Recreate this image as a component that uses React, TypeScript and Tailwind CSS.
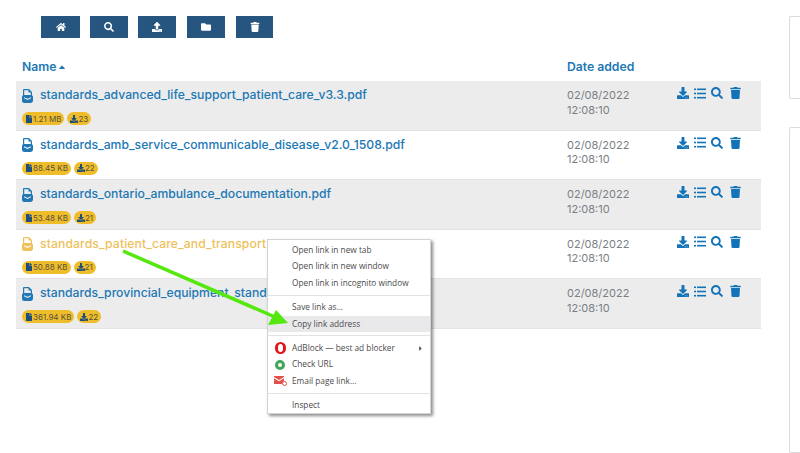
import React from "react";
import { FaHome, FaSearch, FaUpload, FaFolder, FaTrash, FaDownload, FaCaretUp, FaCaretRight, FaFile } from "react-icons/fa";

const files = [
  { name: "standards_advanced_life_support_patient_care_v3.3.pdf", size: "1.21 MB", count: "23" },
  { name: "standards_amb_service_communicable_disease_v2.0_1508.pdf", size: "88.45 KB", count: "22" },
  { name: "standards_ontario_ambulance_documentation.pdf", size: "53.48 KB", count: "21" },
  { name: "standards_patient_care_and_transport", size: "50.88 KB", count: "21", hover: true },
  { name: "standards_provincial_equipment_stand", size: "361.94 KB", count: "22" },
];

const toolbar = [
  { icon: FaHome, width: "w-[39px]", mr: "mr-[10px]" },
  { icon: FaSearch, width: "w-[38px]", mr: "mr-[10px]" },
  { icon: FaUpload, width: "w-[38px]", mr: "mr-[11px]" },
  { icon: FaFolder, width: "w-[38px]", mr: "mr-[11px]" },
  { icon: FaTrash, width: "w-[37px]", mr: "" },
];

function FileIcon() {
  return (
    <svg className="shrink-0" width="11" height="14" viewBox="0 0 11 14" fill="currentColor">
      <path fillRule="evenodd" d="M2 0h5l3 3v3.200c.6.3 1 .9 1 1.600v3.700c0 1.400-1.100 2.500-2.500 2.500h-6A2.500 2.500 0 0 1 0 11.500V7.800c0-.7.4-1.300 1-1.600V1a1 1 0 0 1 1-1zM2.200 1.200V6h6.600V3.600H6.500V1.200zM2 8.200l3.500 1.600L9 8.200v1.100l-3.500 1.600L2 9.300z" />
    </svg>
  );
}

function ListIcon() {
  return (
    <svg width="12" height="11" viewBox="0 0 12 11" fill="currentColor">
      <rect x="0" y="0.500" width="2" height="1.600" />
      <rect x="3" y="0.500" width="9" height="1.600" />
      <rect x="0" y="4.700" width="2" height="1.600" />
      <rect x="3" y="4.700" width="9" height="1.600" />
      <rect x="0" y="8.900" width="2" height="1.600" />
      <rect x="3" y="8.900" width="9" height="1.600" />
    </svg>
  );
}

function Pill({ icon: Icon, text }: { icon: React.ComponentType<{ className?: string }>; text: string }) {
  return (
    <span className="inline-flex h-[13px] items-center rounded-full bg-[#f0bd2a] px-[3px] text-[8px] leading-none text-[#55523f]">
      <Icon className="h-[8px] w-[8px] text-[#1c4f7c]" />
      <span>{text}</span>
    </span>
  );
}

function Row({ name, size, count, hover, shaded }: { name: string; size: string; count: string; hover?: boolean; shaded: boolean }) {
  return (
    <div className={`flex h-[49.500px] items-start border-b border-[#e4e4e4] ${shaded ? "bg-[#ececec]" : "bg-white"}`}>
      <div className="w-[551px] shrink-0 pl-[6px] pt-[6px]">
        <div className={`flex h-[17px] items-center gap-[7px] text-[12.200px] font-medium whitespace-nowrap ${hover ? "tracking-[0.1px] text-[#eec15a]" : "text-[#2178b5]"}`}>
          <FileIcon />
          <span>{name}</span>
        </div>
        <div className="mt-[8px] flex gap-[3px]">
          <Pill icon={FaFile} text={size} />
          <Pill icon={FaDownload} text={count} />
        </div>
      </div>
      <div className="w-[110px] shrink-0 pt-[7px] text-[11px] leading-[14.500px] text-[#7a7f85]">
        <div>02/08/2022</div>
        <div>12:08:10</div>
      </div>
      <div className="flex items-center gap-[5px] pt-[6px] text-[#1273b8]">
        <FaDownload className="h-[12px] w-[12px]" />
        <ListIcon />
        <FaSearch className="h-[12px] w-[12px]" />
        <FaTrash className="ml-[2px] h-[12px] w-[11px]" />
      </div>
    </div>
  );
}

function MenuItem({ text, active, icon, arrow }: { text: string; active?: boolean; icon?: React.ReactNode; arrow?: boolean }) {
  return (
    <div className={`flex h-[16.400px] items-center pr-[6px] text-[8.300px] text-[#4a4a4a] ${active ? "bg-[#e9e9ec]" : ""}`}>
      <span className="flex w-[24px] shrink-0 justify-center">{icon}</span>
      <span className="grow whitespace-nowrap">{text}</span>
      {arrow && <FaCaretRight className="h-[7px] w-[7px] text-[#444]" />}
    </div>
  );
}

function ContextMenu() {
  return (
    <div className="absolute left-[267px] top-[239px] z-10 h-[175px] w-[164px] border border-[#d4d4d4] bg-white pt-[2px] font-['Open_Sans',sans-serif] shadow-[2px_2px_3px_rgba(0,0,0,0.45)]">
      <MenuItem text="Open link in new tab" />
      <MenuItem text="Open link in new window" />
      <MenuItem text="Open link in incognito window" />
      <div className="my-[3.500px] border-t border-[#e2e2e2]" />
      <MenuItem text="Save link as..." />
      <MenuItem text="Copy link address" active />
      <div className="my-[3.500px] border-t border-[#e2e2e2]" />
      <MenuItem text="AdBlock — best ad blocker" arrow icon={<span className="block h-[12px] w-[11px] rounded-full border-x-[3.500px] border-y-[2px] border-[#e0161c]" />} />
      <MenuItem text="Check URL" icon={<span className="block h-[10px] w-[10px] rounded-full border-[3px] border-[#3fa65a]" />} />
      <MenuItem
        text="Email page link..."
        icon={
          <svg width="13" height="11" viewBox="0 0 13 11" fill="#e2504a">
            <path fillRule="evenodd" d="M0 1h10v1L5 5 0 2zM0 3.200l5 3 5-3V6a3 3 0 0 0-2 3H0z" />
            <circle cx="10.500" cy="8.500" r="2" fill="none" stroke="#e2504a" strokeWidth="1" />
          </svg>
        }
      />
      <div className="my-[3.500px] border-t border-[#e2e2e2]" />
      <MenuItem text="Inspect" />
    </div>
  );
}

function GreenArrow() {
  return (
    <svg className="absolute left-[120px] top-[248px] z-20" width="172" height="80" viewBox="0 0 172 80" fill="none">
      <line x1="3" y1="3" x2="155" y2="69" stroke="#55e80f" strokeWidth="3.500" />
      <polygon points="156,62 168,75 148,77" fill="#55e80f" />
    </svg>
  );
}

export default function App() {
  return (
    <div className="relative flex h-[453px] w-[800px] overflow-hidden bg-white font-['Inter',sans-serif]">
      <div className="w-[761px] shrink-0 pl-[16px]">
        <div className="flex pl-[25px] pt-[16px]">
          {toolbar.map((b, i) => (
            <button key={i} className={`flex h-[22px] items-center justify-center bg-[#26557f] text-white ${b.width} ${b.mr}`}>
              <b.icon className="h-[10px] w-[10px]" />
            </button>
          ))}
        </div>
        <div className="flex h-[43px] items-end pb-[5px] text-[12.200px] font-semibold text-[#2178b5]">
          <div className="flex w-[551px] items-center gap-[1px] pl-[6px]">
            <span>Name</span>
            <FaCaretUp className="h-[10px] w-[10px]" />
          </div>
          <div>Date added</div>
        </div>
        <div>
          {files.map((f, i) => (
            <Row key={f.name} {...f} shaded={i % 2 === 0} />
          ))}
        </div>
      </div>
      <div className="ml-[28px] flex grow flex-col pt-[16px]">
        <div className="h-[83px] rounded-l-[2px] border border-r-0 border-[#dcdcdc]" />
        <div className="mt-[28px] grow rounded-l-[2px] border border-r-0 border-[#dcdcdc]" />
      </div>
      <ContextMenu />
      <GreenArrow />
    </div>
  );
}
